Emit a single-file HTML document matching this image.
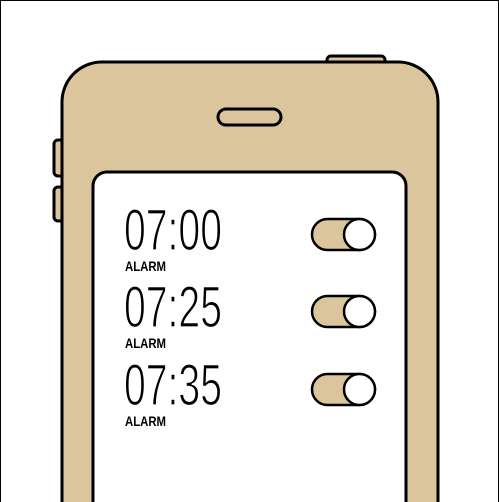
<!DOCTYPE html>
<html><head><style>html,body{margin:0;padding:0;background:#fff;overflow:hidden;width:499px;height:502px}svg{display:block}</style></head>
<body>
<svg width="499" height="502" viewBox="0 0 499 502" xmlns="http://www.w3.org/2000/svg">
<rect x="0.5" y="0.5" width="498" height="510" fill="#fff" stroke="#000" stroke-width="1"/>
<g stroke="#000" stroke-width="3" fill="#dbc59d">
<rect x="327" y="56" width="58" height="14" rx="4"/>
<rect x="54" y="140" width="14" height="36" rx="4"/>
<rect x="54" y="187" width="14" height="34" rx="4"/>
<rect x="62" y="62" width="376" height="480" rx="40"/>
<rect x="218" y="109" width="63" height="16" rx="8" fill="#dbc59d"/>
<rect x="93" y="172" width="313" height="360" rx="14" fill="#fff"/>
</g>
<g font-family="Liberation Sans, sans-serif" stroke="#fff" stroke-width="1.3">
<text x="124" y="250" font-size="58" textLength="98" lengthAdjust="spacingAndGlyphs">07:00</text>
<text x="124" y="327" font-size="58" textLength="98" lengthAdjust="spacingAndGlyphs">07:25</text>
<text x="124" y="405" font-size="58" textLength="98" lengthAdjust="spacingAndGlyphs">07:35</text>
</g>
<g font-family="Liberation Sans, sans-serif" font-weight="bold">
<text x="125" y="271" font-size="14" textLength="41" lengthAdjust="spacingAndGlyphs">ALARM</text>
<text x="125" y="348" font-size="14" textLength="41" lengthAdjust="spacingAndGlyphs">ALARM</text>
<text x="125" y="426" font-size="14" textLength="41" lengthAdjust="spacingAndGlyphs">ALARM</text>
</g>
<g stroke="#000" stroke-width="2.5">
<rect x="312" y="219" width="63" height="31" rx="15.5" fill="#dbc59d"/>
<circle cx="359.5" cy="234.5" r="15.5" fill="#fff"/>
<rect x="312" y="296" width="63" height="31" rx="15.5" fill="#dbc59d"/>
<circle cx="359.5" cy="311.5" r="15.5" fill="#fff"/>
<rect x="312" y="374" width="63" height="31" rx="15.5" fill="#dbc59d"/>
<circle cx="359.5" cy="389.5" r="15.5" fill="#fff"/>
</g>
</svg>
</body></html>
